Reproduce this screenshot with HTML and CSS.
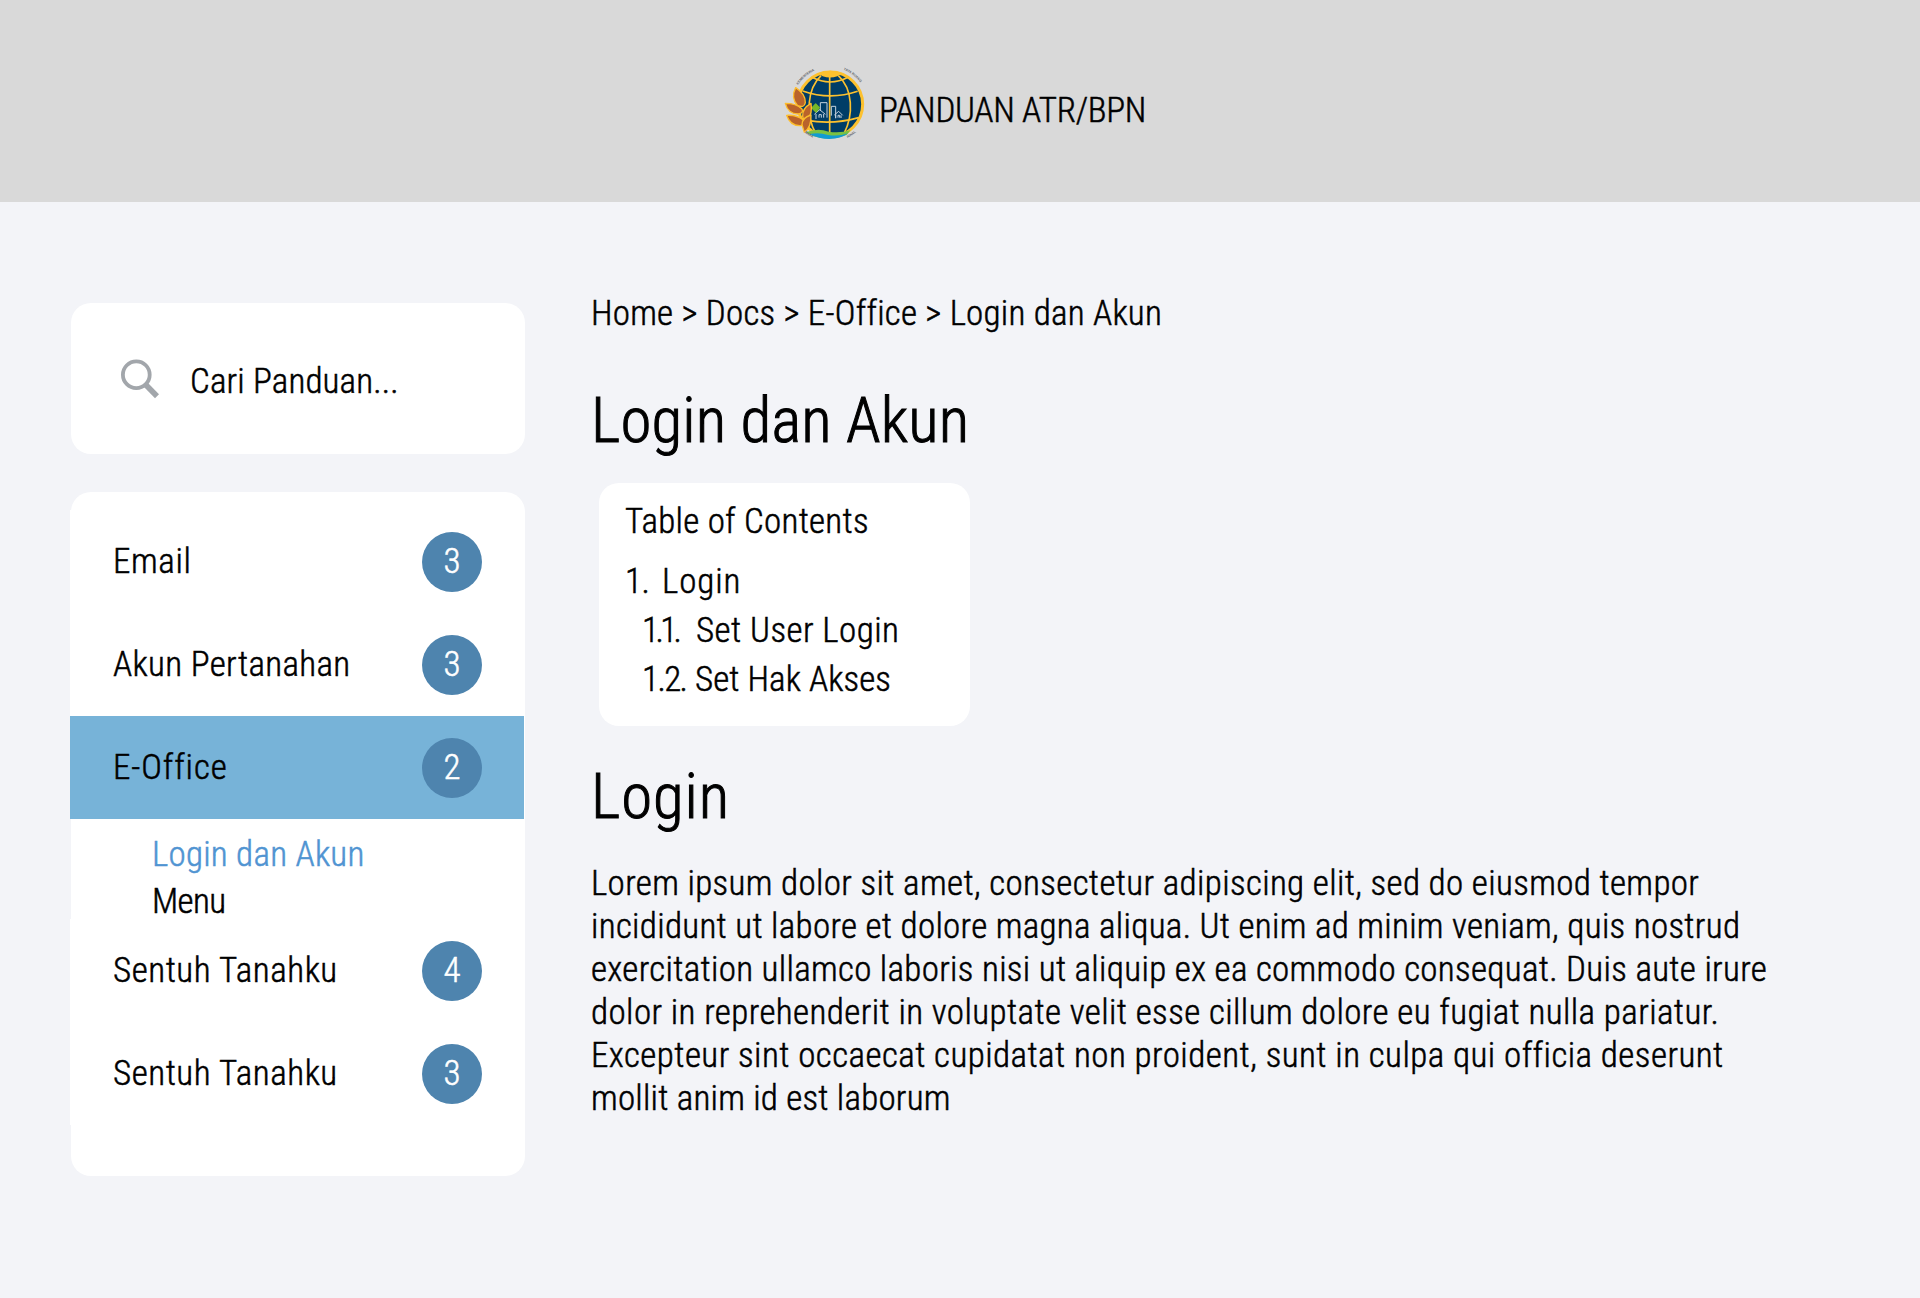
FILE: index.html
```html
<!DOCTYPE html>
<html lang="id">
<head>
<meta charset="utf-8">
<title>Panduan ATR/BPN</title>
<link rel="stylesheet" href="styles.css">
</head>
<body>
<header class="header">
  <svg class="logo" viewBox="36 36 258 222" aria-hidden="true">
    <defs>
      <path id="arc-top" d="M67 150a113 113 0 0 1 226 0"/>
      <path id="arc-bottom" d="M64 144a117 117 0 0 0 234 0"/>
    </defs>
    <circle cx="181" cy="148" r="97" fill="#003d67" stroke="#fdc12e" stroke-width="9"/>
    <g fill="none" stroke="#fdc12e" stroke-width="5">
      <path d="M179 54v184M153 62C113 100 104 180 139 238M205 62c44 40 46 118 17 174"/>
      <path d="M126 67q55 28 108 0M98 108q82 29 165 1M110 196q78 14 156-8"/>
    </g>
    <path d="M143 55q38-16 76 0l-17 9q-22 7-44 0z" fill="#fdc12e"/>
    <g fill="#003d67" stroke="#c5d3df" stroke-width="3">
      <path d="M151 168v-25h20v45M184 182v-28h13v36"/>
      <path d="M133 178l16-14 17 14M138 177v15M161 177v11M147 188v-9h7v9M193 180l13-11 12 12M197 180v9M213 181v8M204 188v-7h5v7" fill="none"/>
    </g>
    <path d="M137 147l11 11-10 13-12-12z" fill="#76b82a" stroke="#76b82a" stroke-width="4" stroke-linejoin="round"/>
    <path d="M108 232q34-14 68-2 35 6 66-5l-12 15q-50 20-102 3z" fill="#7ac142"/>
    <path d="M118 238q26-8 56 2 33 5 60-5-22 17-56 17-30 0-60-14z" fill="#119bd2"/>
    <g fill="#b9632b" stroke="#fdbd2c" stroke-width="4" stroke-linejoin="round">
      <path d="M77 98q-16 31 6 54 20 8 23-9 1-26-29-45z"/>
      <path d="M46 145q8 31 38 32 18-2 12-15-17-17-50-17z"/>
      <path d="M123 145q-27 15-25 39 3 16 15 8 15-16 10-47z"/>
      <path d="M50 181q11 33 42 31 17-4 8-17-19-16-50-14z"/>
      <path d="M123 180q-27 8-27 29l7 23q22-16 20-52z"/>
    </g>
    <g class="logo-caption">
      <text><textPath href="#arc-top" startOffset="63">KEMENTERIA</textPath></text>
      <text><textPath href="#arc-top" startOffset="219">TATA RUANG</textPath></text>
      <text><textPath href="#arc-bottom" startOffset="100">BADA</textPath></text>
      <text><textPath href="#arc-bottom" startOffset="237">IONAL</textPath></text>
    </g>
  </svg>
  <span class="brand">PANDUAN ATR/BPN</span>
</header>

<div class="page">
  <aside class="sidebar">
    <div class="search">
      <svg class="search-icon" viewBox="0 0 40 42" aria-hidden="true">
        <path d="M25.5 26.5L37 38.3" stroke-width="5.6"/>
        <circle cx="16.3" cy="16.7" r="13.4" stroke-width="3.8"/>
      </svg>
      <span class="search-text">Cari Panduan...</span>
    </div>
    <nav class="menu">
      <a class="row"><span class="t-email">Email</span><b class="badge">3</b></a>
      <a class="row"><span class="t-akun">Akun Pertanahan</span><b class="badge">3</b></a>
      <a class="row active"><span class="t-office">E-Office</span><b class="badge">2</b></a>
      <div class="submenu">
        <a class="current">Login dan Akun</a>
        <a class="t-menu">Menu</a>
      </div>
      <a class="row"><span class="t-sentuh">Sentuh Tanahku</span><b class="badge">4</b></a>
      <a class="row"><span class="t-sentuh">Sentuh Tanahku</span><b class="badge">3</b></a>
    </nav>
  </aside>

  <main class="content">
    <div class="breadcrumb">Home &gt; Docs &gt; E-Office &gt; Login dan Akun</div>
    <h1>Login dan Akun</h1>
    <section class="toc">
      <div class="toc-title">Table of Contents</div>
      <div class="toc-item"><span class="num n1">1.</span><span class="t-login">Login</span></div>
      <div class="toc-item sub"><span class="num n11">1.1.</span><span class="t-user">Set User Login</span></div>
      <div class="toc-item sub"><span class="num n12">1.2.</span><span class="t-hak">Set Hak Akses</span></div>
    </section>
    <h2>Login</h2>
    <p class="article">
      <span class="l1">Lorem ipsum dolor sit amet, consectetur adipiscing elit, sed do eiusmod tempor</span>
      <span class="l2">incididunt ut labore et dolore magna aliqua. Ut enim ad minim veniam, quis nostrud</span>
      <span class="l3">exercitation ullamco laboris nisi ut aliquip ex ea commodo consequat. Duis aute irure</span>
      <span class="l4">dolor in reprehenderit in voluptate velit esse cillum dolore eu fugiat nulla pariatur.</span>
      <span class="l5">Excepteur sint occaecat cupidatat non proident, sunt in culpa qui officia deserunt</span>
      <span class="l6">mollit anim id est laborum</span>
    </p>
  </main>
</div>
</body>
</html>
```
FILE: styles.css
```css
* { box-sizing: border-box; }

body {
  margin: 0;
  min-height: 1298px;
  background: #f3f4f8;
  color: #000;
  font: 300 35px/43px Roboto, "Liberation Sans", sans-serif;
  font-stretch: 75%;
  -webkit-text-stroke: 0.5px currentColor;
  white-space: nowrap;
}

.header {
  display: flex;
  gap: 11px;
  height: 202px;
  padding: 67px 0 0 782px;
  background: #d9d9d9;
}
.logo { width: 86px; height: 74px; overflow: visible; }
.logo-caption {
  font: 700 10px "Liberation Sans", sans-serif;
  fill: #5f6468;
  -webkit-text-stroke: 0;
}
.brand { padding-top: 22px; letter-spacing: -0.3px; }

.page {
  display: grid;
  grid-template-columns: 454px 1fr;
  column-gap: 66px;
  padding-left: 71px;
}

.sidebar {
  display: flex;
  flex-direction: column;
  gap: 38px;
  padding-top: 101px;
}
.search {
  display: flex;
  height: 151px;
  padding: 55px 0 0 49px;
  border-radius: 20px;
  background: #fff;
}
.search-icon {
  width: 40px;
  height: 42px;
  fill: none;
  stroke: #a2a6ab;
}
.search-text { padding-top: 2px; margin-left: 30px; letter-spacing: 0.15px; }

.menu {
  height: 684px;
  padding-top: 18px;
  border-radius: 20px;
  background: #fff;
}
.row {
  display: flex;
  align-items: center;
  justify-content: space-between;
  width: 454px;
  height: 103px;
  margin-left: -1px;
  padding: 0 42px 0 43px;
  background: #fff;
}
.row.active { background: #77b3d8; }
.badge {
  width: 60px;
  height: 60px;
  border-radius: 50%;
  background: #4e84ae;
  color: #fff;
  font-weight: 300;
  line-height: 60px;
  text-align: center;
}
.submenu {
  display: flex;
  flex-direction: column;
  height: 100px;
  padding: 12px 0 0 81px;
  line-height: 47px;
}
.current { color: #5094d2; letter-spacing: 0.25px; }
.t-email { letter-spacing: 0.6px; }
.t-akun { letter-spacing: 0.35px; }
.t-office { letter-spacing: 0.9px; }
.t-menu { letter-spacing: -0.64px; }
.t-sentuh { letter-spacing: 0.55px; }

.content { padding-top: 90px; }
.breadcrumb { letter-spacing: 0.24px; }
h1, h2 {
  margin: 48px 0 0;
  font-size: 63px;
  font-weight: 300;
  line-height: 76px;
  letter-spacing: 0.14px;
  -webkit-text-stroke-width: 1px;
}
h2 { margin-top: 33px; letter-spacing: 0.9px; }

.toc {
  width: 371px;
  height: 243px;
  margin: 24px 0 0 8px;
  padding: 14px 0 0 25px;
  border-radius: 20px;
  background: #fff;
  line-height: 49px;
}
.toc-title { margin-bottom: 11px; padding-left: 1px; letter-spacing: 0.26px; }
.toc-item { display: flex; padding-left: 1px; }
.toc-item.sub { padding-left: 18px; }
.n1 { width: 37px; letter-spacing: -0.4px; }
.n11 { width: 54px; letter-spacing: -3.6px; }
.n12 { width: 53px; letter-spacing: -1.6px; }
.t-login { letter-spacing: 0.9px; }
.t-user { letter-spacing: 0.45px; }
.t-hak { letter-spacing: 0.08px; }

.article { display: flex; flex-direction: column; margin: 27px 0 0; }
.l1 { letter-spacing: 0.36px; }
.l2 { letter-spacing: 0.31px; }
.l3 { letter-spacing: 0.315px; }
.l4 { letter-spacing: 0.412px; }
.l5 { letter-spacing: 0.447px; }
.l6 { letter-spacing: 0.229px; }
```
